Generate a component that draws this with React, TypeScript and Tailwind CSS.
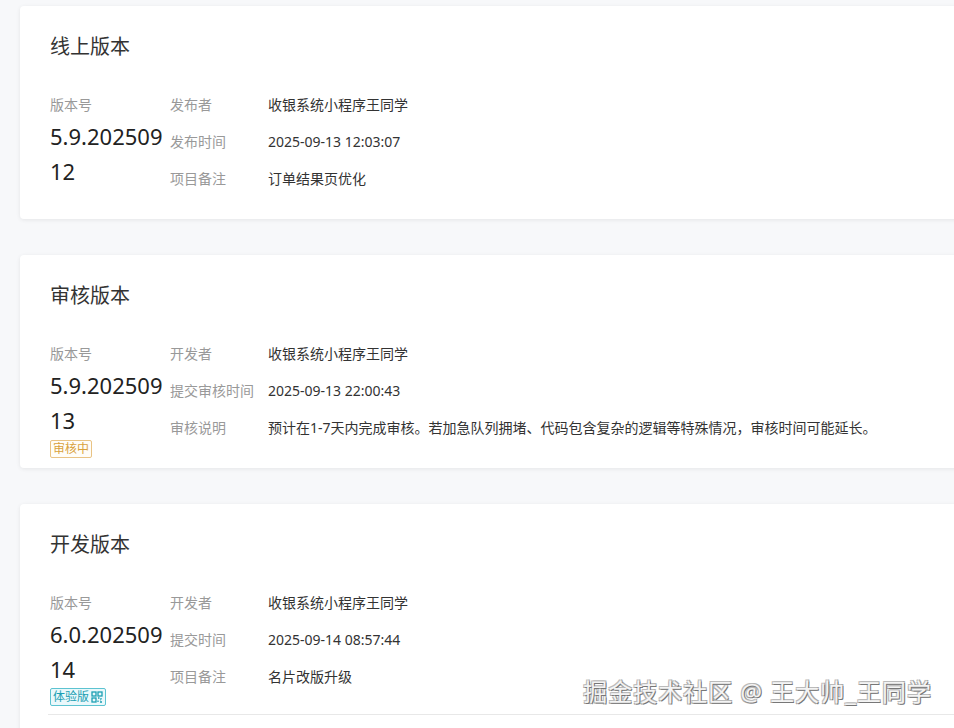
import React from 'react'

type Row = { label: string; value: string }

type VersionCard = {
  title: string
  version: string
  rows: Row[]
  badge?: 'review' | 'trial'
  divider?: boolean
}

const cards: VersionCard[] = [
  {
    title: '线上版本',
    version: '5.9.20250912',
    rows: [
      { label: '发布者', value: '收银系统小程序王同学' },
      { label: '发布时间', value: '2025-09-13 12:03:07' },
      { label: '项目备注', value: '订单结果页优化' },
    ],
  },
  {
    title: '审核版本',
    version: '5.9.20250913',
    rows: [
      { label: '开发者', value: '收银系统小程序王同学' },
      { label: '提交审核时间', value: '2025-09-13 22:00:43' },
      {
        label: '审核说明',
        value: '预计在1-7天内完成审核。若加急队列拥堵、代码包含复杂的逻辑等特殊情况，审核时间可能延长。',
      },
    ],
    badge: 'review',
  },
  {
    title: '开发版本',
    version: '6.0.20250914',
    rows: [
      { label: '开发者', value: '收银系统小程序王同学' },
      { label: '提交时间', value: '2025-09-14 08:57:44' },
      { label: '项目备注', value: '名片改版升级' },
    ],
    badge: 'trial',
    divider: true,
  },
]

function QrIcon() {
  return (
    <svg width="12" height="12" viewBox="0 0 12 12" fill="none" stroke="currentColor" strokeWidth="1.3">
      <rect x="1" y="1" width="4" height="4" />
      <rect x="7" y="1" width="4" height="4" />
      <rect x="1" y="7" width="4" height="4" />
      <path d="M7 7h1.5M10 7v1.5M7 9.5V11M9 11h2M9 9h0.5" />
    </svg>
  )
}

function Badge({ kind }: { kind: 'review' | 'trial' }) {
  if (kind === 'review') {
    return (
      <span className="mt-[2px] inline-flex h-[18px] items-center rounded-[2px] border border-[#e9c384] bg-[#fffdf8] px-[2px] text-[12px] leading-none text-[#d9a13c]">
        审核中
      </span>
    )
  }
  return (
    <span className="mt-[1px] inline-flex h-[18px] items-center gap-[2px] rounded-[2px] border border-[#5cc3d1] bg-[#eaf8fb] px-[2px] text-[12px] leading-none text-[#1b9fb3]">
      体验版
      <QrIcon />
    </span>
  )
}

function Card({ card }: { card: VersionCard }) {
  return (
    <div className="w-[1000px] rounded-[4px] bg-white pt-[30px] pb-[10px] shadow-[0_1px_4px_rgba(0,0,0,0.08)]">
      <div className="px-[30px] text-[20px] leading-[22px] text-[#333]">{card.title}</div>
      <div className="mt-[37px] flex items-start px-[30px]">
        <div className="flex w-[120px] shrink-0 flex-col items-start">
          <div className="text-[14px] leading-[20px] text-[#999]">版本号</div>
          <div className="mt-[4px] w-[120px] break-all text-[22px] leading-[35px] text-[#222]">
            {card.version}
          </div>
          {card.badge && <Badge kind={card.badge} />}
        </div>
        <div className="grid grid-cols-[98px_1fr] gap-y-[17px] pb-[20px] text-[14px] leading-[20px]">
          {card.rows.map((r) => (
            <React.Fragment key={r.label}>
              <div className="text-[#999]">{r.label}</div>
              <div className="whitespace-nowrap text-[#333]">{r.value}</div>
            </React.Fragment>
          ))}
        </div>
      </div>
      {card.divider && <div className="mt-[7px] ml-[28px] h-px bg-[#e8e8e8]" />}
      {card.divider && <div className="h-[40px]" />}
    </div>
  )
}

export default function App() {
  return (
    <div
      className="relative h-[728px] w-[954px] overflow-hidden bg-[#f7f8fa]"
      style={{ fontFamily: '"Noto Sans", "Noto Sans CJK SC", sans-serif' }}
    >
      <div className="flex flex-col gap-[36px] pt-[6px] pl-[20px]">
        {cards.map((c) => (
          <Card key={c.title} card={c} />
        ))}
      </div>
      <div className="absolute top-[676px] right-[22px] text-[24px] leading-[32px] tracking-[1px] text-[#f4f4f4] [text-shadow:1px_1px_0_#777,-1px_-1px_0_#bbb,1px_-1px_0_#aaa,-1px_1px_0_#aaa]">
        掘金技术社区 @ 王大帅_王同学
      </div>
    </div>
  )
}
